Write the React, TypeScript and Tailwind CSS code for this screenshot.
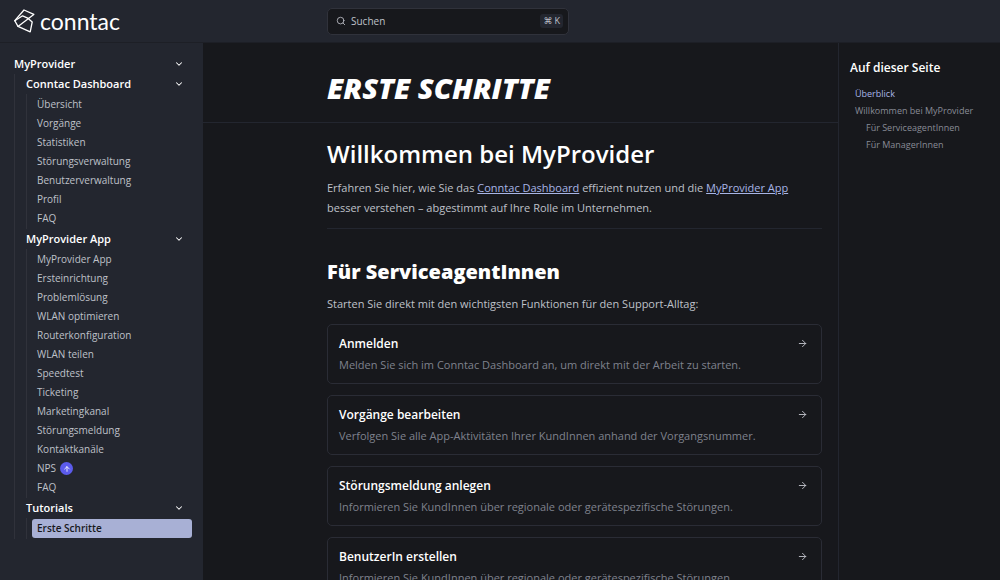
import { ArrowRight, ArrowUp, ChevronDown, Search } from "lucide-react";

type Leaf = { label: string; badge?: boolean; current?: boolean };
type Group = { label: string; items: Leaf[] };

const groups: Group[] = [
  {
    label: "Conntac Dashboard",
    items: [
      { label: "Übersicht" },
      { label: "Vorgänge" },
      { label: "Statistiken" },
      { label: "Störungsverwaltung" },
      { label: "Benutzerverwaltung" },
      { label: "Profil" },
      { label: "FAQ" },
    ],
  },
  {
    label: "MyProvider App",
    items: [
      { label: "MyProvider App" },
      { label: "Ersteinrichtung" },
      { label: "Problemlösung" },
      { label: "WLAN optimieren" },
      { label: "Routerkonfiguration" },
      { label: "WLAN teilen" },
      { label: "Speedtest" },
      { label: "Ticketing" },
      { label: "Marketingkanal" },
      { label: "Störungsmeldung" },
      { label: "Kontaktkanäle" },
      { label: "NPS", badge: true },
      { label: "FAQ" },
    ],
  },
  { label: "Tutorials", items: [{ label: "Erste Schritte", current: true }] },
];

const cards = [
  { title: "Anmelden", text: "Melden Sie sich im Conntac Dashboard an, um direkt mit der Arbeit zu starten." },
  { title: "Vorgänge bearbeiten", text: "Verfolgen Sie alle App-Aktivitäten Ihrer KundInnen anhand der Vorgangsnummer." },
  { title: "Störungsmeldung anlegen", text: "Informieren Sie KundInnen über regionale oder gerätespezifische Störungen." },
  { title: "BenutzerIn erstellen", text: "Informieren Sie KundInnen über regionale oder gerätespezifische Störungen." },
];

function Logo() {
  return (
    <a href="#start" className="flex items-center gap-1 text-white">
      <svg viewBox="0 0 22 24" className="h-6 w-[22px]" fill="none" stroke="currentColor" strokeWidth="1.3" strokeLinejoin="round" strokeLinecap="round" aria-hidden="true">
        <path d="M0.8 11.7 10 1 19.8 5.4 4 17.4Z" />
        <path d="M0.8 11.7 8.6 6.8 14.2 9.4" />
        <path d="M4 17.4 16.2 22.8 18.2 13 14.2 9.4" />
      </svg>
      <span className="pb-px font-[Lato,sans-serif] text-[23px] leading-6">conntac</span>
    </a>
  );
}

function GroupButton({ label }: { label: string }) {
  return (
    <button type="button" className="flex h-5 w-full items-center justify-between pr-2 text-left text-[11px] font-semibold text-white">
      {label}
      <ChevronDown size={10} strokeWidth={2.5} />
    </button>
  );
}

function Sidebar() {
  return (
    <nav aria-label="Hauptnavigation" className="w-[203px] shrink-0 overflow-y-auto bg-[#23262f] pt-[11px] pr-[11px] pl-[14px] [scrollbar-width:none]">
      <GroupButton label="MyProvider" />
      <ul className="border-l border-[#30323b] pl-[11px]">
        {groups.map((group) => (
          <li key={group.label}>
            <GroupButton label={group.label} />
            <ul className="border-l border-[#30323b] py-px pl-[5px]">
              {group.items.map((item) => (
                <li key={item.label}>
                  <a
                    href="#seite"
                    aria-current={item.current ? "page" : undefined}
                    className={
                      item.current
                        ? "flex h-[19px] items-center rounded-[3px] bg-[#a8b0d5] px-[5px] text-[10px] font-semibold text-[#17181c]"
                        : "flex h-[19px] items-center gap-1 px-[5px] text-[10px] text-[#bfc1c9]"
                    }
                  >
                    {item.label}
                    {item.badge && (
                      <span className="flex size-[13px] items-center justify-center rounded-full bg-[#5b5bec] text-white">
                        <ArrowUp size={8} strokeWidth={2.5} />
                      </span>
                    )}
                  </a>
                </li>
              ))}
            </ul>
          </li>
        ))}
      </ul>
    </nav>
  );
}

function Contents() {
  return (
    <aside className="w-[162px] shrink-0 border-l border-[#23262f] pt-[17px] pl-[11px]">
      <h2 className="text-xs leading-4 font-semibold text-white">Auf dieser Seite</h2>
      <ul className="mt-[9px] pl-[5px] text-[9px] leading-[17px] text-[#888b96]">
        <li><a href="#ueberblick" className="text-[#a8b5e6]">Überblick</a></li>
        <li><a href="#willkommen">Willkommen bei MyProvider</a></li>
        <li className="pl-[11px]"><a href="#service">Für ServiceagentInnen</a></li>
        <li className="pl-[11px]"><a href="#manager">Für ManagerInnen</a></li>
      </ul>
    </aside>
  );
}

export default function App() {
  return (
    <div className="flex h-screen flex-col bg-[#17181c] font-['Open_Sans',sans-serif] text-[#bfc1c9]">
      <header className="flex h-[43px] shrink-0 items-center border-b border-[#1d1f26] bg-[#23262f]">
        <div className="w-[203px] shrink-0 pl-[14px]"><Logo /></div>
        <div className="flex-1 pr-[178px]">
          <div className="ml-auto max-w-[495px]">
            <button type="button" className="flex h-[27px] w-[242px] items-center gap-[5px] rounded-[5px] border border-[#30323b] bg-[#17181c] pr-[5px] pl-2 text-[10px]">
              <Search size={10} strokeWidth={2} />
              <span>Suchen</span>
              <kbd className="ml-auto flex h-[14px] items-center gap-[2px] rounded-[3px] bg-[#23262f] px-[3px] font-['Open_Sans','DejaVu_Sans',sans-serif] text-[9px]">
                <span>⌘</span><span>K</span>
              </kbd>
            </button>
          </div>
        </div>
      </header>
      <div className="flex min-h-0 flex-1">
        <Sidebar />
        <main className="min-w-0 flex-1 overflow-y-auto [scrollbar-width:none]">
          <div className="border-b border-[#23262f] pt-[25px] pr-4 pb-[14px]">
            <h1 id="ueberblick" className="ml-auto max-w-[495px] text-[29px] leading-10 font-extrabold text-white uppercase italic">Erste Schritte</h1>
          </div>
          <div className="pt-[15px] pr-4 pb-8">
            <div className="ml-auto max-w-[495px]">
              <h2 id="willkommen" className="text-2xl leading-8 font-semibold text-white">Willkommen bei MyProvider</h2>
              <p className="mt-2 text-[11px] leading-5">
                Erfahren Sie hier, wie Sie das <a href="#dashboard" className="text-[#a8b5e6] underline">Conntac Dashboard</a> effizient nutzen und die{" "}
                <a href="#app" className="text-[#a8b5e6] underline">MyProvider App</a> besser verstehen – abgestimmt auf Ihre Rolle im Unternehmen.
              </p>
              <hr className="mt-[10px] border-[#23262f]" />
              <h3 id="service" className="mt-[29px] text-xl leading-7 font-extrabold text-white">Für ServiceagentInnen</h3>
              <p className="mt-2 text-[11px] leading-5">Starten Sie direkt mit den wichtigsten Funktionen für den Support-Alltag:</p>
              <div className="mt-[10px] flex flex-col gap-[11px]">
                {cards.map((card) => (
                  <a key={card.title} href="#karte" className="flex items-start justify-between rounded-[5px] border border-[#2a2c35] px-[11px] pt-[9px] pb-2">
                    <span className="flex flex-col gap-[1px]">
                      <span className="text-xs leading-5 font-semibold text-white">{card.title}</span>
                      <span className="text-[11px] leading-5 text-[#7f828d]">{card.text}</span>
                    </span>
                    <ArrowRight size={11} strokeWidth={2} className="mt-1 mr-[2px] shrink-0" />
                  </a>
                ))}
              </div>
            </div>
          </div>
        </main>
        <Contents />
      </div>
    </div>
  );
}
